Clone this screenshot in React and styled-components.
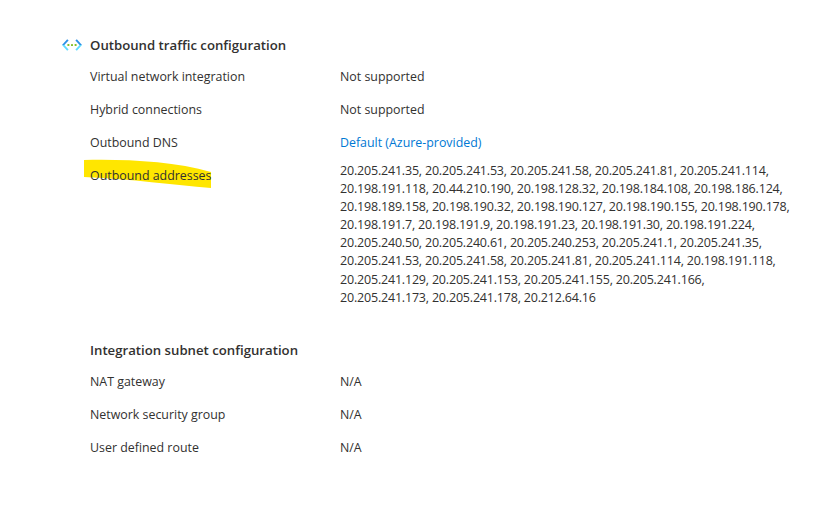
import React from "react";
import styled, { createGlobalStyle } from "styled-components";

const GlobalStyle = createGlobalStyle`
  html, body {
    margin: 0;
    padding: 0;
    background: #fff;
  }
`;

const addresses = `20.205.241.35, 20.205.241.53, 20.205.241.58, 20.205.241.81, 20.205.241.114,
20.198.191.118, 20.44.210.190, 20.198.128.32, 20.198.184.108, 20.198.186.124,
20.198.189.158, 20.198.190.32, 20.198.190.127, 20.198.190.155, 20.198.190.178,
20.198.191.7, 20.198.191.9, 20.198.191.23, 20.198.191.30, 20.198.191.224,
20.205.240.50, 20.205.240.61, 20.205.240.253, 20.205.241.1, 20.205.241.35,
20.205.241.53, 20.205.241.58, 20.205.241.81, 20.205.241.114, 20.198.191.118,
20.205.241.129, 20.205.241.153, 20.205.241.155, 20.205.241.166,
20.205.241.173, 20.205.241.178, 20.212.64.16`.split("\n");

function App() {
  return (
    <Page>
      <GlobalStyle />
      <SectionHead>
        <IconSlot>
          <svg width="22" height="14" viewBox="0 0 22 14">
            <path d="M6.2 1.2 L1 7 L3.4 7 L7.6 2.6 Z" fill="#2b90e6" />
            <path d="M1 7 L6.2 12.8 L7.6 11.4 L3.4 7 Z" fill="#5fdcff" />
            <path d="M15.8 1.2 L21 7 L18.6 7 L14.4 2.6 Z" fill="#2b90e6" />
            <path d="M21 7 L15.8 12.8 L14.4 11.4 L18.6 7 Z" fill="#5fdcff" />
            <rect x="6.4" y="6" width="2" height="2" rx="0.6" fill="#86c02a" />
            <rect x="10" y="6" width="2" height="2" rx="0.6" fill="#86c02a" />
            <rect x="13.6" y="6" width="2" height="2" rx="0.6" fill="#86c02a" />
          </svg>
        </IconSlot>
        <Heading>Outbound traffic configuration</Heading>
      </SectionHead>
      <Rows>
        <Row>
          <Label>Virtual network integration</Label>
          <Value>Not supported</Value>
        </Row>
        <Row>
          <Label>Hybrid connections</Label>
          <Value>Not supported</Value>
        </Row>
        <Row>
          <Label>Outbound DNS</Label>
          <LinkValue href="#">Default (Azure-provided)</LinkValue>
        </Row>
        <Row>
          <Label>
            <Highlight viewBox="0 0 130 32" preserveAspectRatio="none">
              <path d="M1 1 C40 0 90 2 128 13 L128 29 C90 26 50 20 1 18 Z" fill="#ffe600" />
            </Highlight>
            <LabelText>Outbound addresses</LabelText>
          </Label>
          <AddressList>
            {addresses.map((line) => (
              <AddressLine key={line}>{line}</AddressLine>
            ))}
          </AddressList>
        </Row>
      </Rows>
      <SubHeading>Integration subnet configuration</SubHeading>
      <Rows>
        <Row>
          <Label>NAT gateway</Label>
          <Value>N/A</Value>
        </Row>
        <Row>
          <Label>Network security group</Label>
          <Value>N/A</Value>
        </Row>
        <Row>
          <Label>User defined route</Label>
          <Value>N/A</Value>
        </Row>
      </Rows>
    </Page>
  );
}

const Page = styled.div`
  width: 820px;
  height: 526px;
  box-sizing: border-box;
  padding: 36px 0 0 61px;
  overflow: hidden;
  font-family: "Open Sans", "Noto Sans", sans-serif;
  font-size: 12.4px;
  color: #323130;
`;

const SectionHead = styled.div`
  display: flex;
  align-items: center;
  height: 18px;
  margin-bottom: 14px;
`;

const IconSlot = styled.div`
  width: 29px;
  height: 14px;
  display: flex;
`;

const Heading = styled.div`
  font-weight: 600;
  font-size: 13.2px;
  white-space: nowrap;
`;

const SubHeading = styled(Heading)`
  margin: 34px 0 14px 29px;
  line-height: 18px;
`;

const Rows = styled.div`
  display: flex;
  flex-direction: column;
  gap: 15px;
  padding-left: 29px;
`;

const Row = styled.div`
  display: flex;
  line-height: 18px;
`;

const Label = styled.div`
  position: relative;
  width: 250px;
  flex: none;
`;

const LabelText = styled.span`
  position: relative;
`;

const Highlight = styled.svg`
  position: absolute;
  left: -7px;
  top: -8px;
  width: 130px;
  height: 32px;
`;

const Value = styled.div`
  white-space: nowrap;
`;

const LinkValue = styled.a`
  color: #0078d4;
  text-decoration: none;
`;

const AddressList = styled.div`
  margin-top: -5px;
  white-space: nowrap;
  font-size: 12.5px;
  letter-spacing: -0.19px;
`;

const AddressLine = styled.div`
  line-height: 18.1px;
`;

export default App;
